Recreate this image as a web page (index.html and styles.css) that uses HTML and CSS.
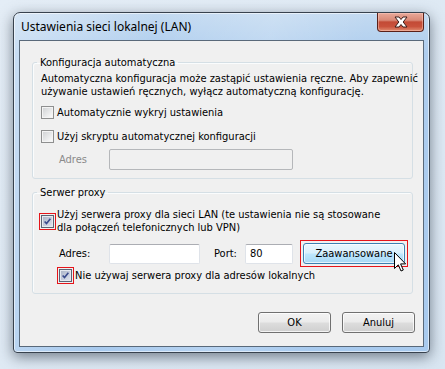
FILE: index.html
```
<!DOCTYPE html>
<html lang="pl">
<head>
<meta charset="utf-8">
<title>Ustawienia sieci lokalnej (LAN)</title>
<link rel="stylesheet" href="styles.css">
</head>
<body>
<div class="window">
  <div class="titlebar">
    <span class="title">Ustawienia sieci lokalnej (LAN)</span>
    <div class="close">
      <svg width="16" height="12" viewBox="0 0 16 12"><path d="M2 1 L6 1 L8 3.5 L10 1 L14 1 L10.2 6 L14 11 L10 11 L8 8.5 L6 11 L2 11 L5.8 6 Z" fill="#fff" stroke="#3b1d18" stroke-width="1" stroke-linejoin="round"/></svg>
    </div>
  </div>
  <div class="client">
    <fieldset class="group group-auto">
      <legend>Konfiguracja automatyczna</legend>
      <p class="desc">Automatyczna konfiguracja może zastąpić ustawienia ręczne. Aby zapewnić<br>używanie ustawień ręcznych, wyłącz automatyczną konfigurację.</p>
      <div class="check first"><span class="box"></span><span class="check-label">Automatycznie wykryj ustawienia</span></div>
      <div class="check second"><span class="box"></span><span class="check-label">Użyj skryptu automatycznej konfiguracji</span></div>
      <div class="row script-row"><span class="lbl lbl-disabled">Adres</span><span class="input input-disabled"></span></div>
    </fieldset>
    <fieldset class="group group-proxy">
      <legend>Serwer proxy</legend>
      <div class="check multi"><span class="mark mark-box"><span class="box checked"><svg width="11" height="11" viewBox="0 0 11 11"><path d="M2 5.5 L4.3 8 L9 2.2" fill="none" stroke="#3a4a8c" stroke-width="2"/></svg></span></span><span class="check-label">Użyj serwera proxy dla sieci LAN (te ustawienia nie są stosowane<br>dla połączeń telefonicznych lub VPN)</span></div>
      <div class="row proxy-row">
        <span class="lbl lbl-addr">Adres:</span>
        <span class="input input-addr"></span>
        <span class="lbl lbl-port">Port:</span>
        <span class="input input-port">80</span>
        <span class="mark mark-btn">
          <button class="btn btn-hover">Zaawansowane</button>
          <svg class="cursor" width="13" height="21" viewBox="0 0 13 21"><path d="M0.5 0.5 L0.5 16.5 L4.3 12.8 L7 19 L9.3 18 L6.6 11.9 L11.6 11.9 Z" fill="#fff" stroke="#000" stroke-width="1" stroke-linejoin="miter"/></svg>
        </span>
      </div>
      <div class="check local"><span class="mark mark-box"><span class="box checked"><svg width="11" height="11" viewBox="0 0 11 11"><path d="M2 5.5 L4.3 8 L9 2.2" fill="none" stroke="#3a4a8c" stroke-width="2"/></svg></span></span><span class="check-label">Nie używaj serwera proxy dla adresów lokalnych</span></div>
    </fieldset>
    <div class="actions">
      <button class="btn">OK</button>
      <button class="btn">Anuluj</button>
    </div>
  </div>
</div>
</body>
</html>
```
FILE: styles.css
```
* { box-sizing: border-box; }
html, body { margin: 0; padding: 0; }
body {
  width: 445px;
  height: 369px;
  overflow: hidden;
  background: linear-gradient(135deg, #e4edf6 0%, #d9e6f2 100%);
  font-family: "DejaVu Sans Condensed", "DejaVu Sans", sans-serif;
  font-size: 11px;
  color: #000;
}
.window {
  margin: 12px 0 0 13px;
  width: 417px;
  height: 341px;
  border: 1px solid #38424e;
  border-radius: 7px 7px 4px 4px;
  padding: 0 5px 5px;
  display: flex;
  flex-direction: column;
  background:
    linear-gradient(100deg, rgba(255,255,255,0.35) 0%, rgba(255,255,255,0) 30%, rgba(255,255,255,0.18) 55%, rgba(255,255,255,0) 75%),
    linear-gradient(to bottom, #c3daf1 0%, #aecdee 12%, #a8caee 100%);
  box-shadow: 0 4px 14px rgba(30, 40, 55, 0.55), inset 0 0 0 1px rgba(255,255,255,0.55);
}
.titlebar {
  height: 27px;
  display: flex;
  justify-content: space-between;
  align-items: flex-start;
}
.title {
  padding-left: 2px;
  line-height: 28px;
  font-family: "Noto Sans", "Open Sans", sans-serif;
  font-size: 12px;
  color: #000;
}
.close {
  width: 47px;
  height: 19px;
  border: 1px solid #5a2019;
  border-top: none;
  border-radius: 0 0 4px 4px;
  background: linear-gradient(to bottom, #e9a999 0%, #d98a78 40%, #c34b36 50%, #c9523c 75%, #e08c70 100%);
  box-shadow: inset 0 0 0 1px rgba(255, 210, 200, 0.45);
  display: flex;
  align-items: center;
  justify-content: center;
}
.client {
  flex: 1;
  border: 1px solid #59697a;
  background: #f0f0f0;
  padding: 15px 10px 0 12px;
  display: flex;
  flex-direction: column;
}
.group {
  margin: 0;
  padding: 3px 8px 8px;
  border: 1px solid #d5dfe5;
  border-radius: 3px;
  min-width: 0;
  box-shadow: inset 1px 1px 0 #fafcfd;
}
.group legend {
  padding: 0 3px;
  margin-left: -4px;
  line-height: 13px;
}
.group-proxy {
  margin-top: 7px;
  padding-top: 9px;
  padding-bottom: 9px;
}
.desc {
  margin: 0;
  line-height: 13px;
  white-space: nowrap;
}
.check {
  display: flex;
  align-items: center;
  line-height: 13px;
  white-space: nowrap;
}
.check-label { margin-left: 3px; }
.check.first { margin-top: 8px; }
.check.second { margin-top: 11px; }
.check.local { margin-top: 0; padding-left: 16px; }
.check.multi { margin-left: -2px; }
.box {
  width: 13px;
  height: 13px;
  flex: none;
  border: 1px solid #8e8f8f;
  background:
    linear-gradient(135deg, #d2d4d6 0%, #e6e7e8 50%, #fafafa 100%) content-box,
    #f4f4f4;
  padding: 1px;
  display: flex;
  align-items: center;
  justify-content: center;
}
.box.checked {
  border-color: #5a6374;
  background: linear-gradient(135deg, #aeb6c8 0%, #c4cadb 50%, #dde1ec 100%) content-box, #e6e9f0;
}
.box svg { display: block; }
.mark {
  border: 1px solid #e5141a;
  flex: none;
}
.mark-box {
  padding: 1px;
  display: block;
}
.mark-box + .check-label { margin-left: 1px; }
.row {
  display: flex;
  align-items: center;
}
.lbl { flex: none; }
.script-row { margin-top: 6px; padding-left: 18px; }
.lbl-disabled { color: #8a8a8a; width: 50px; }
.input {
  display: block;
  flex: none;
  height: 21px;
  background: #fff;
  border: 1px solid #dfe3e9;
  border-top-color: #abadb3;
  border-radius: 2px;
  padding: 0 4px;
  line-height: 18px;
}
.input-disabled {
  width: 184px;
  background: #f0f0f0;
  border-color: #b5b7ba;
}
.proxy-row {
  margin-top: 6px;
  padding-left: 18px;
}
.lbl-addr { width: 50px; }
.input-addr { width: 91px; height: 20px; }
.lbl-port { margin-left: 14px; width: 31px; }
.input-port { width: 48px; height: 20px; }
.mark-btn {
  position: relative;
  margin-left: 7px;
  padding: 2px;
  display: block;
}
.btn {
  width: 73px;
  height: 21px;
  padding: 0;
  margin: 0;
  font-family: inherit;
  font-size: 11px;
  color: #000;
  border: 1px solid #707070;
  border-radius: 3px;
  background: linear-gradient(to bottom, #f2f2f2 0%, #ebebeb 48%, #dddddd 52%, #cfcfcf 100%);
  box-shadow: inset 0 0 0 1px rgba(255,255,255,0.75);
}
.btn-hover {
  width: 102px;
  border-color: #3c7fb1;
  background: linear-gradient(to bottom, #eaf6fd 0%, #d9f0fc 48%, #bee6fd 52%, #a7d9f5 100%);
  box-shadow: inset 0 0 0 1px rgba(255,255,255,0.7);
  display: block;
}
.cursor {
  position: absolute;
  left: 93px;
  top: 11px;
}
.actions {
  margin-top: 18px;
  margin-right: -2px;
  display: flex;
  justify-content: flex-end;
  gap: 11px;
}
```
